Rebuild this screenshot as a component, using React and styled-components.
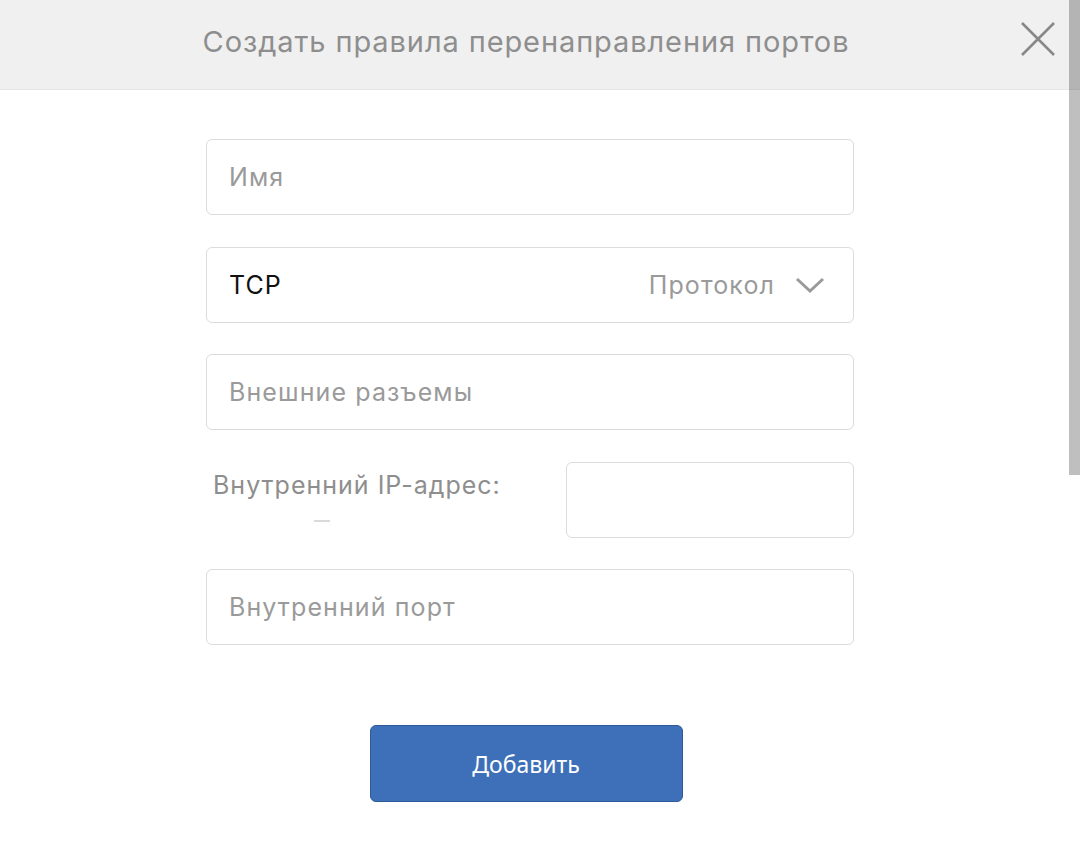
import React from "react";
import styled, { createGlobalStyle } from "styled-components";

const GlobalStyle = createGlobalStyle`
  html, body {
    margin: 0;
    padding: 0;
    background: #fff;
    font-family: Inter, "Noto Sans", sans-serif;
  }
`;

const Page = styled.div`
  position: relative;
  width: 1080px;
  height: 851px;
  overflow: hidden;
  background: #fff;
`;

const Header = styled.div`
  height: 89px;
  background: #f0f0f0;
  border-bottom: 1px solid #e6e6e6;
  display: flex;
  align-items: center;
  justify-content: center;
  position: relative;
  padding-right: 28px;
`;

const Title = styled.h1`
  margin: 0 0 6px;
  font-weight: 400;
  font-size: 29px;
  letter-spacing: 0.9px;
  color: #8e8e8e;
`;

const CloseButton = styled.button`
  position: absolute;
  right: 24px;
  top: 21px;
  width: 36px;
  height: 36px;
  padding: 0;
  border: 0;
  background: none;
  cursor: pointer;
`;

const Scrollbar = styled.div`
  position: absolute;
  top: 0;
  right: 0;
  width: 11px;
  height: 475px;
  background: rgba(0, 0, 0, 0.25);
`;

const Form = styled.form`
  width: 648px;
  margin-left: 206px;
  padding-top: 49px;
  display: flex;
  flex-direction: column;
  gap: 31.5px;
`;

const Field = styled.div`
  box-sizing: border-box;
  height: 76px;
  width: ${({ $width }) => $width || "100%"};
  border: 1px solid #dcdcdc;
  border-radius: 6px;
  display: flex;
  align-items: center;
  padding: 0 28px 0 22px;
  font-size: 25px;
  letter-spacing: 1.1px;
  color: ${({ $filled }) => ($filled ? "#111" : "#9a9a9a")};
`;

const Value = styled.span`
  flex: 1;
  margin-top: 0;
`;

const Hint = styled.span`
  color: #9a9a9a;
  margin-right: 20px;
`;

const Row = styled.div`
  display: flex;
  justify-content: space-between;
  height: 76px;
`;

const Label = styled.div`
  position: relative;
  padding: 8px 0 0 7px;
  font-size: 25px;
  letter-spacing: 1px;
  color: #8e8e8e;
`;

const Dash = styled.span`
  position: absolute;
  left: 108px;
  top: 58px;
  width: 16px;
  height: 2px;
  background: #dadada;
`;

const Actions = styled.div`
  display: flex;
  justify-content: center;
  padding-top: 80px;
  padding-right: 28px;
`;

const Submit = styled.button`
  width: 313px;
  height: 77px;
  background: #3d70b9;
  border: 1px solid #2d5a98;
  border-radius: 6px;
  color: #fff;
  font-family: "Noto Sans", Roboto, sans-serif;
  font-size: 23px;
  cursor: pointer;
`;

const Chevron = () => (
  <svg width="30" height="18" viewBox="0 0 30 18">
    <path d="M2 3 L15 15 L28 3" fill="none" stroke="#9a9a9a" strokeWidth="3" />
  </svg>
);

export default function App() {
  return (
    <Page>
      <GlobalStyle />
      <Header>
        <Title>Создать правила перенаправления портов</Title>
        <CloseButton aria-label="close">
          <svg width="36" height="36" viewBox="0 0 36 36">
            <path d="M2 2 L34 34 M34 2 L2 34" stroke="#888" strokeWidth="2.6" />
          </svg>
        </CloseButton>
      </Header>
      <Form>
        <Field>
          <Value>Имя</Value>
        </Field>
        <Field $filled>
          <Value>TCP</Value>
          <Hint>Протокол</Hint>
          <Chevron />
        </Field>
        <Field>
          <Value>Внешние разъемы</Value>
        </Field>
        <Row>
          <Label>
            Внутренний IP-адрес:
            <Dash />
          </Label>
          <Field $width="288px" />
        </Row>
        <Field>
          <Value>Внутренний порт</Value>
        </Field>
      </Form>
      <Actions>
        <Submit type="button">Добавить</Submit>
      </Actions>
      <Scrollbar />
    </Page>
  );
}
